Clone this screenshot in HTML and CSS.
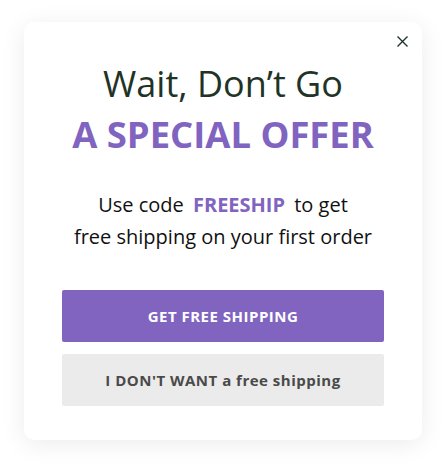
FILE: index.html
```html
<!DOCTYPE html>
<html lang="en">
<head>
  <meta charset="UTF-8">
  <title>Wait, Don't Go</title>
  <link rel="stylesheet" href="styles.css">
</head>
<body>

<div class="popup">
  <button class="close" aria-label="Close">
    <svg width="11" height="11" viewBox="0 0 11 11"><path d="M0.5 0.5L10.5 10.5M10.5 0.5L0.5 10.5" stroke="#1f3326" stroke-width="1.4" fill="none"/></svg>
  </button>

  <h1 class="title">Wait, Don’t Go</h1>
  <h2 class="offer">A SPECIAL OFFER</h2>

  <p class="message">
    Use code <span class="code">FREESHIP</span> to get<br>
    free shipping on your first order
  </p>

  <div class="actions">
    <button class="btn btn-primary">GET FREE SHIPPING</button>
    <button class="btn btn-secondary">I DON'T WANT a free shipping</button>
  </div>
</div>

</body>
</html>
```

FILE: styles.css
```css
html, body {
  margin: 0;
  padding: 0;
  background: #ffffff;
  font-family: 'Open Sans', 'Noto Sans', sans-serif;
}

body {
  padding: 22px 24px;
}

.popup {
  position: relative;
  width: 398px;
  height: 418px;
  box-sizing: border-box;
  padding: 0 38px;
  background: #fff;
  border-radius: 10px;
  box-shadow: 0 4px 24px rgba(0, 0, 0, 0.08);
  display: flex;
  flex-direction: column;
  align-items: center;
  text-align: center;
}

.close {
  position: absolute;
  top: 14px;
  right: 14px;
  width: 11px;
  height: 11px;
  padding: 0;
  border: none;
  background: none;
  display: flex;
  cursor: pointer;
}

.title {
  margin: 39px 0 0;
  font-size: 36px;
  font-weight: 400;
  line-height: 46px;
  color: #1f3326;
}

.offer {
  margin: 6px 0 0;
  font-size: 36.4px;
  font-weight: 700;
  line-height: 42px;
  color: #8064bf;
}

.message {
  margin: 34px 0 0;
  font-size: 20px;
  line-height: 32px;
  color: #111;
}

.code {
  color: #8064bf;
  font-weight: 700;
  margin: 0 4px;
}

.actions {
  margin-top: 37px;
  width: 100%;
  display: flex;
  flex-direction: column;
  gap: 12px;
}

.btn {
  height: 52px;
  border: none;
  border-radius: 2px;
  font-family: inherit;
  font-size: 15px;
  font-weight: 700;
  letter-spacing: 0.5px;
  cursor: pointer;
}

.btn-primary {
  background: #8064bf;
  color: #fff;
}

.btn-secondary {
  background: #ebebeb;
  color: #4a4a4a;
}
```
